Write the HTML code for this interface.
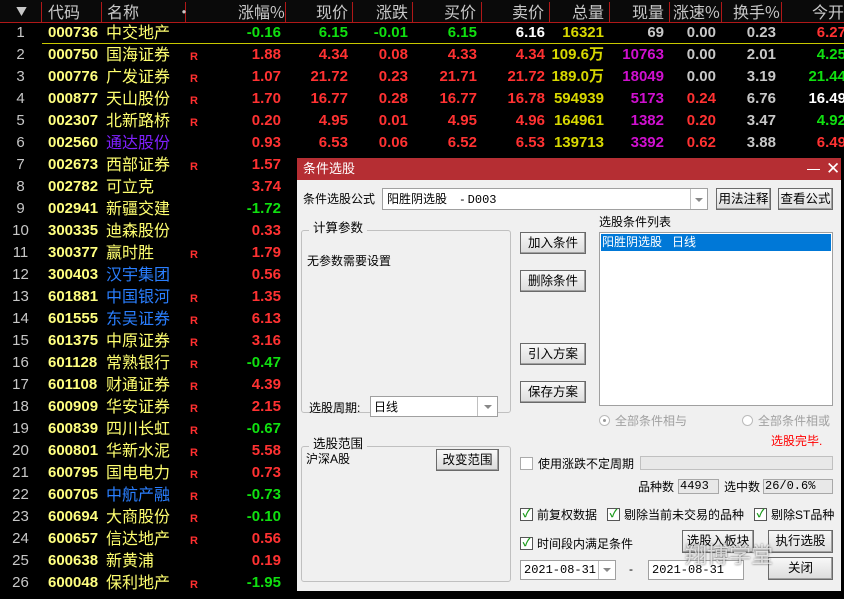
<!DOCTYPE html>
<html><head><meta charset="utf-8"><style>
*{margin:0;padding:0;box-sizing:border-box}
body{width:844px;height:599px;background:#000;position:relative;overflow:hidden;font-family:"Liberation Sans","Noto Sans CJK SC",sans-serif}
.hd{position:absolute;left:0;top:0;width:844px;height:23px;background:#0a0a0a;border-bottom:1px solid #b01818}
.hs{position:absolute;top:2px;width:1px;height:20px;background:#b01818}
.ht{position:absolute;top:1px;color:#c8c8c8;font-size:16px;font-family:"Noto Sans CJK SC",sans-serif;line-height:20px;white-space:nowrap}
.r{position:absolute;left:0;width:844px;height:22px;font-size:15px;font-weight:bold;line-height:22px}
.r span{position:absolute;white-space:nowrap}
.n{left:0;width:41px;text-align:center;color:#c8c8c8;font-weight:normal}
.c{left:48px;color:#ffff80}
.m{left:106px;top:-2px;font-family:"Noto Sans CJK SC",sans-serif;font-weight:normal;font-size:16px;line-height:22px;color:#ffff70}
.R{left:190px;font-size:11px;color:#ff3030;top:2px}
.a{right:563px}.b{right:496px}.d{right:436px}.e{right:367px}.f{right:299px}.g{right:240px}.h{right:180px}.i{right:128px}.j{right:68px}.k{right:-2px}
.rd{color:#ff3232}.gr{color:#10e010}.wh{color:#fff}.yl{color:#d8d800}.mg{color:#d010d0}.gy{color:#c8c8c8}
.bl{color:#2a7fff!important}.pu{color:#8020ff!important}
.dlg{position:absolute;left:297px;top:158px;width:544px;height:433px;background:#f0f0f0;font-family:"Liberation Sans","Noto Sans CJK SC",sans-serif;font-size:12px;line-height:15px;color:#000}
.dlg div{position:absolute;white-space:nowrap}
.tb{left:0;top:0;width:544px;height:22px;background:#b52e33;color:#fff;line-height:22px!important;padding-left:6px;font-size:13px}
.btn{border:1px solid #6a6a6a;background:linear-gradient(#f8f8f8,#dcdcdc);text-align:center;line-height:20px!important;box-shadow:inset -1px -1px 0 #a0a0a0;font-size:12.5px}
.box{background:#fff;border:1px solid #a0a0a0}
.arr{width:0;height:0;border-left:4px solid transparent;border-right:4px solid transparent;border-top:4px solid #888}
.grp{border:1px solid #c0c0c0;border-radius:3px}
.gt{background:#f0f0f0;padding:0 4px;font-size:12.5px}
.cb{width:13px;height:13px;border:1px solid #555;background:#fff;color:#1a9a1a;font-size:11px;line-height:11px!important;text-align:center;font-weight:bold}
.fld{background:#e8e8e8;border:1px solid #a8a8a8;font-family:"Liberation Mono",monospace;font-size:12px;line-height:13px!important;padding-left:1px}
.t13{font-size:12px}
</style></head><body>
<div class="hd"></div>
<div class="hs" style="left:41px"></div><div class="hs" style="left:101px"></div><div class="hs" style="left:185px"></div><div class="hs" style="left:285px"></div><div class="hs" style="left:352px"></div><div class="hs" style="left:412px"></div><div class="hs" style="left:481px"></div><div class="hs" style="left:549px"></div><div class="hs" style="left:609px"></div><div class="hs" style="left:669px"></div><div class="hs" style="left:721px"></div><div class="hs" style="left:781px"></div>
<div class="ht" style="left:16px;font-size:11px">▼</div>
<div class="ht" style="left:48px">代码</div><div class="ht" style="left:107px">名称</div><div class="ht" style="left:176px">•</div>
<div class="ht" style="left:238px">涨幅%</div><div class="ht" style="left:316px">现价</div><div class="ht" style="left:376px">涨跌</div><div class="ht" style="left:444px">买价</div><div class="ht" style="left:512px">卖价</div><div class="ht" style="left:572px">总量</div><div class="ht" style="left:632px">现量</div><div class="ht" style="left:673px">涨速%</div><div class="ht" style="left:733px">换手%</div><div class="ht" style="left:812px">今开</div>
<div style="position:absolute;left:42px;top:43px;width:802px;height:1px;background:#c8c800"></div>

<div class="r" style="top:22px"><span class="n">1</span><span class="c">000736</span><span class="m">中交地产</span><span class="a gr">-0.16</span><span class="b gr">6.15</span><span class="d gr">-0.01</span><span class="e gr">6.15</span><span class="f wh">6.16</span><span class="g yl">16321</span><span class="h gy">69</span><span class="i gy">0.00</span><span class="j gy">0.23</span><span class="k rd">6.27</span></div>
<div class="r" style="top:44px"><span class="n">2</span><span class="c">000750</span><span class="m">国海证券</span><span class="R">R</span><span class="a rd">1.88</span><span class="b rd">4.34</span><span class="d rd">0.08</span><span class="e rd">4.33</span><span class="f rd">4.34</span><span class="g yl">109.6万</span><span class="h mg">10763</span><span class="i gy">0.00</span><span class="j gy">2.01</span><span class="k gr">4.25</span></div>
<div class="r" style="top:66px"><span class="n">3</span><span class="c">000776</span><span class="m">广发证券</span><span class="R">R</span><span class="a rd">1.07</span><span class="b rd">21.72</span><span class="d rd">0.23</span><span class="e rd">21.71</span><span class="f rd">21.72</span><span class="g yl">189.0万</span><span class="h mg">18049</span><span class="i gy">0.00</span><span class="j gy">3.19</span><span class="k gr">21.44</span></div>
<div class="r" style="top:88px"><span class="n">4</span><span class="c">000877</span><span class="m">天山股份</span><span class="R">R</span><span class="a rd">1.70</span><span class="b rd">16.77</span><span class="d rd">0.28</span><span class="e rd">16.77</span><span class="f rd">16.78</span><span class="g yl">594939</span><span class="h mg">5173</span><span class="i rd">0.24</span><span class="j gy">6.76</span><span class="k wh">16.49</span></div>
<div class="r" style="top:110px"><span class="n">5</span><span class="c">002307</span><span class="m">北新路桥</span><span class="R">R</span><span class="a rd">0.20</span><span class="b rd">4.95</span><span class="d rd">0.01</span><span class="e rd">4.95</span><span class="f rd">4.96</span><span class="g yl">164961</span><span class="h mg">1382</span><span class="i rd">0.20</span><span class="j gy">3.47</span><span class="k gr">4.92</span></div>
<div class="r" style="top:132px"><span class="n">6</span><span class="c">002560</span><span class="m pu">通达股份</span><span class="a rd">0.93</span><span class="b rd">6.53</span><span class="d rd">0.06</span><span class="e rd">6.52</span><span class="f rd">6.53</span><span class="g yl">139713</span><span class="h mg">3392</span><span class="i rd">0.62</span><span class="j gy">3.88</span><span class="k rd">6.49</span></div>
<div class="r" style="top:154px"><span class="n">7</span><span class="c">002673</span><span class="m">西部证券</span><span class="R">R</span><span class="a rd">1.57</span></div>
<div class="r" style="top:176px"><span class="n">8</span><span class="c">002782</span><span class="m">可立克</span><span class="a rd">3.74</span></div>
<div class="r" style="top:198px"><span class="n">9</span><span class="c">002941</span><span class="m">新疆交建</span><span class="a gr">-1.72</span></div>
<div class="r" style="top:220px"><span class="n">10</span><span class="c">300335</span><span class="m">迪森股份</span><span class="a rd">0.33</span></div>
<div class="r" style="top:242px"><span class="n">11</span><span class="c">300377</span><span class="m">赢时胜</span><span class="R">R</span><span class="a rd">1.79</span></div>
<div class="r" style="top:264px"><span class="n">12</span><span class="c">300403</span><span class="m bl">汉宇集团</span><span class="a rd">0.56</span></div>
<div class="r" style="top:286px"><span class="n">13</span><span class="c">601881</span><span class="m bl">中国银河</span><span class="R">R</span><span class="a rd">1.35</span></div>
<div class="r" style="top:308px"><span class="n">14</span><span class="c">601555</span><span class="m bl">东吴证券</span><span class="R">R</span><span class="a rd">6.13</span></div>
<div class="r" style="top:330px"><span class="n">15</span><span class="c">601375</span><span class="m">中原证券</span><span class="R">R</span><span class="a rd">3.16</span></div>
<div class="r" style="top:352px"><span class="n">16</span><span class="c">601128</span><span class="m">常熟银行</span><span class="R">R</span><span class="a gr">-0.47</span></div>
<div class="r" style="top:374px"><span class="n">17</span><span class="c">601108</span><span class="m">财通证券</span><span class="R">R</span><span class="a rd">4.39</span></div>
<div class="r" style="top:396px"><span class="n">18</span><span class="c">600909</span><span class="m">华安证券</span><span class="R">R</span><span class="a rd">2.15</span></div>
<div class="r" style="top:418px"><span class="n">19</span><span class="c">600839</span><span class="m">四川长虹</span><span class="R">R</span><span class="a gr">-0.67</span></div>
<div class="r" style="top:440px"><span class="n">20</span><span class="c">600801</span><span class="m">华新水泥</span><span class="R">R</span><span class="a rd">5.58</span></div>
<div class="r" style="top:462px"><span class="n">21</span><span class="c">600795</span><span class="m">国电电力</span><span class="R">R</span><span class="a rd">0.73</span></div>
<div class="r" style="top:484px"><span class="n">22</span><span class="c">600705</span><span class="m bl">中航产融</span><span class="R">R</span><span class="a gr">-0.73</span></div>
<div class="r" style="top:506px"><span class="n">23</span><span class="c">600694</span><span class="m">大商股份</span><span class="R">R</span><span class="a gr">-0.10</span></div>
<div class="r" style="top:528px"><span class="n">24</span><span class="c">600657</span><span class="m">信达地产</span><span class="R">R</span><span class="a rd">0.56</span></div>
<div class="r" style="top:550px"><span class="n">25</span><span class="c">600638</span><span class="m">新黄浦</span><span class="a rd">0.19</span></div>
<div class="r" style="top:572px"><span class="n">26</span><span class="c">600048</span><span class="m">保利地产</span><span class="R">R</span><span class="a gr">-1.95</span></div>

<div class="dlg">
<div class="tb">条件选股</div>
<div style="left:510px;top:11px;width:13px;height:1px;background:#fff"></div>
<div style="left:529px;top:0;color:#fff;font-size:17px;line-height:22px">✕</div>
<div class="t13" style="left:6px;top:34px">条件选股公式</div>
<div class="box" style="left:85px;top:30px;width:326px;height:22px"></div>
<div class="t13" style="left:90px;top:34px">阳胜阴选股 &nbsp;&nbsp;&nbsp;- <span style="font-family:'Liberation Mono',monospace;font-size:12px">D003</span></div>
<div style="left:393px;top:31px;width:1px;height:20px;background:#c0c0c0"></div>
<div class="arr" style="left:398px;top:40px"></div>
<div class="btn" style="left:419px;top:30px;width:55px;height:22px">用法注释</div>
<div class="btn" style="left:481px;top:30px;width:55px;height:22px">查看公式</div>
<div class="grp" style="left:4px;top:72px;width:210px;height:183px"></div>
<div class="gt" style="left:12px;top:63px">计算参数</div>
<div class="t13" style="left:10px;top:96px">无参数需要设置</div>
<div class="t13" style="left:12px;top:243px">选股周期:</div>
<div class="box" style="left:73px;top:238px;width:128px;height:21px"></div>
<div class="t13" style="left:77px;top:242px">日线</div>
<div style="left:180px;top:239px;width:1px;height:19px;background:#c0c0c0"></div>
<div class="arr" style="left:187px;top:247px"></div>
<div class="btn" style="left:223px;top:74px;width:66px;height:22px">加入条件</div>
<div class="btn" style="left:223px;top:112px;width:66px;height:22px">删除条件</div>
<div class="btn" style="left:223px;top:185px;width:66px;height:22px">引入方案</div>
<div class="btn" style="left:223px;top:223px;width:66px;height:22px">保存方案</div>
<div class="t13" style="left:302px;top:57px">选股条件列表</div>
<div class="box" style="left:302px;top:74px;width:234px;height:174px"></div>
<div class="t13" style="left:304px;top:76px;width:230px;height:17px;background:#0078d7;color:#fff;line-height:17px;padding-left:1px">阳胜阴选股 &nbsp;&nbsp;日线</div>
<div style="left:302px;top:257px;width:11px;height:11px;border-radius:50%;border:1px solid #bbb;background:#fff"><div style="left:3px;top:3px;width:3px;height:3px;border-radius:50%;background:#999"></div></div>
<div class="t13" style="left:318px;top:256px;color:#a0a0a0">全部条件相与</div>
<div style="left:445px;top:257px;width:11px;height:11px;border-radius:50%;border:1px solid #bbb;background:#fff"></div>
<div class="t13" style="left:461px;top:256px;color:#a0a0a0">全部条件相或</div>
<div class="t13" style="left:474px;top:276px;color:#ff0000">选股完毕.</div>
<div class="grp" style="left:4px;top:288px;width:210px;height:136px"></div>
<div class="gt" style="left:12px;top:279px">选股范围</div>
<div class="t13" style="left:9px;top:294px">沪深A股</div>
<div class="btn" style="left:139px;top:291px;width:63px;height:22px">改变范围</div>
<div class="cb" style="left:223px;top:299px;border-color:#aaa"></div>
<div class="t13" style="left:241px;top:299px">使用涨跌不定周期</div>
<div style="left:343px;top:298px;width:193px;height:14px;border:1px solid #c0c0c0;background:#e8e8e8"></div>
<div class="t13" style="left:341px;top:322px">品种数</div>
<div class="fld" style="left:381px;top:321px;width:41px;height:15px">4493</div>
<div class="t13" style="left:427px;top:322px">选中数</div>
<div class="fld" style="left:466px;top:321px;width:70px;height:15px">26/0.6%</div>
<div class="cb" style="left:223px;top:350px">✓</div><div class="t13" style="left:240px;top:350px">前复权数据</div>
<div class="cb" style="left:310px;top:350px">✓</div><div class="t13" style="left:327px;top:350px">剔除当前未交易的品种</div>
<div class="cb" style="left:457px;top:350px">✓</div><div class="t13" style="left:474px;top:350px">剔除ST品种</div>
<div class="cb" style="left:223px;top:379px">✓</div><div class="t13" style="left:240px;top:379px">时间段内满足条件</div>
<div class="btn" style="left:385px;top:372px;width:72px;height:23px">选股入板块</div>
<div class="btn" style="left:471px;top:372px;width:65px;height:23px">执行选股</div>
<div class="box" style="left:223px;top:402px;width:96px;height:20px"></div>
<div style="left:227px;top:405px;font-family:'Liberation Mono',monospace;font-size:12px">2021-08-31</div>
<div style="left:301px;top:403px;width:1px;height:18px;background:#c0c0c0"></div>
<div class="arr" style="left:306px;top:410px"></div>
<div style="left:332px;top:404px">-</div>
<div class="box" style="left:351px;top:402px;width:96px;height:20px"></div>
<div style="left:355px;top:405px;font-family:'Liberation Mono',monospace;font-size:12px">2021-08-31</div>
<div class="btn" style="left:471px;top:399px;width:65px;height:23px">关闭</div>
<div style="left:388px;top:384px;font-size:22px;line-height:28px;color:rgba(255,255,255,0.7);text-shadow:0 0 2px #555">翔博学堂</div>
</div>
</body></html>
